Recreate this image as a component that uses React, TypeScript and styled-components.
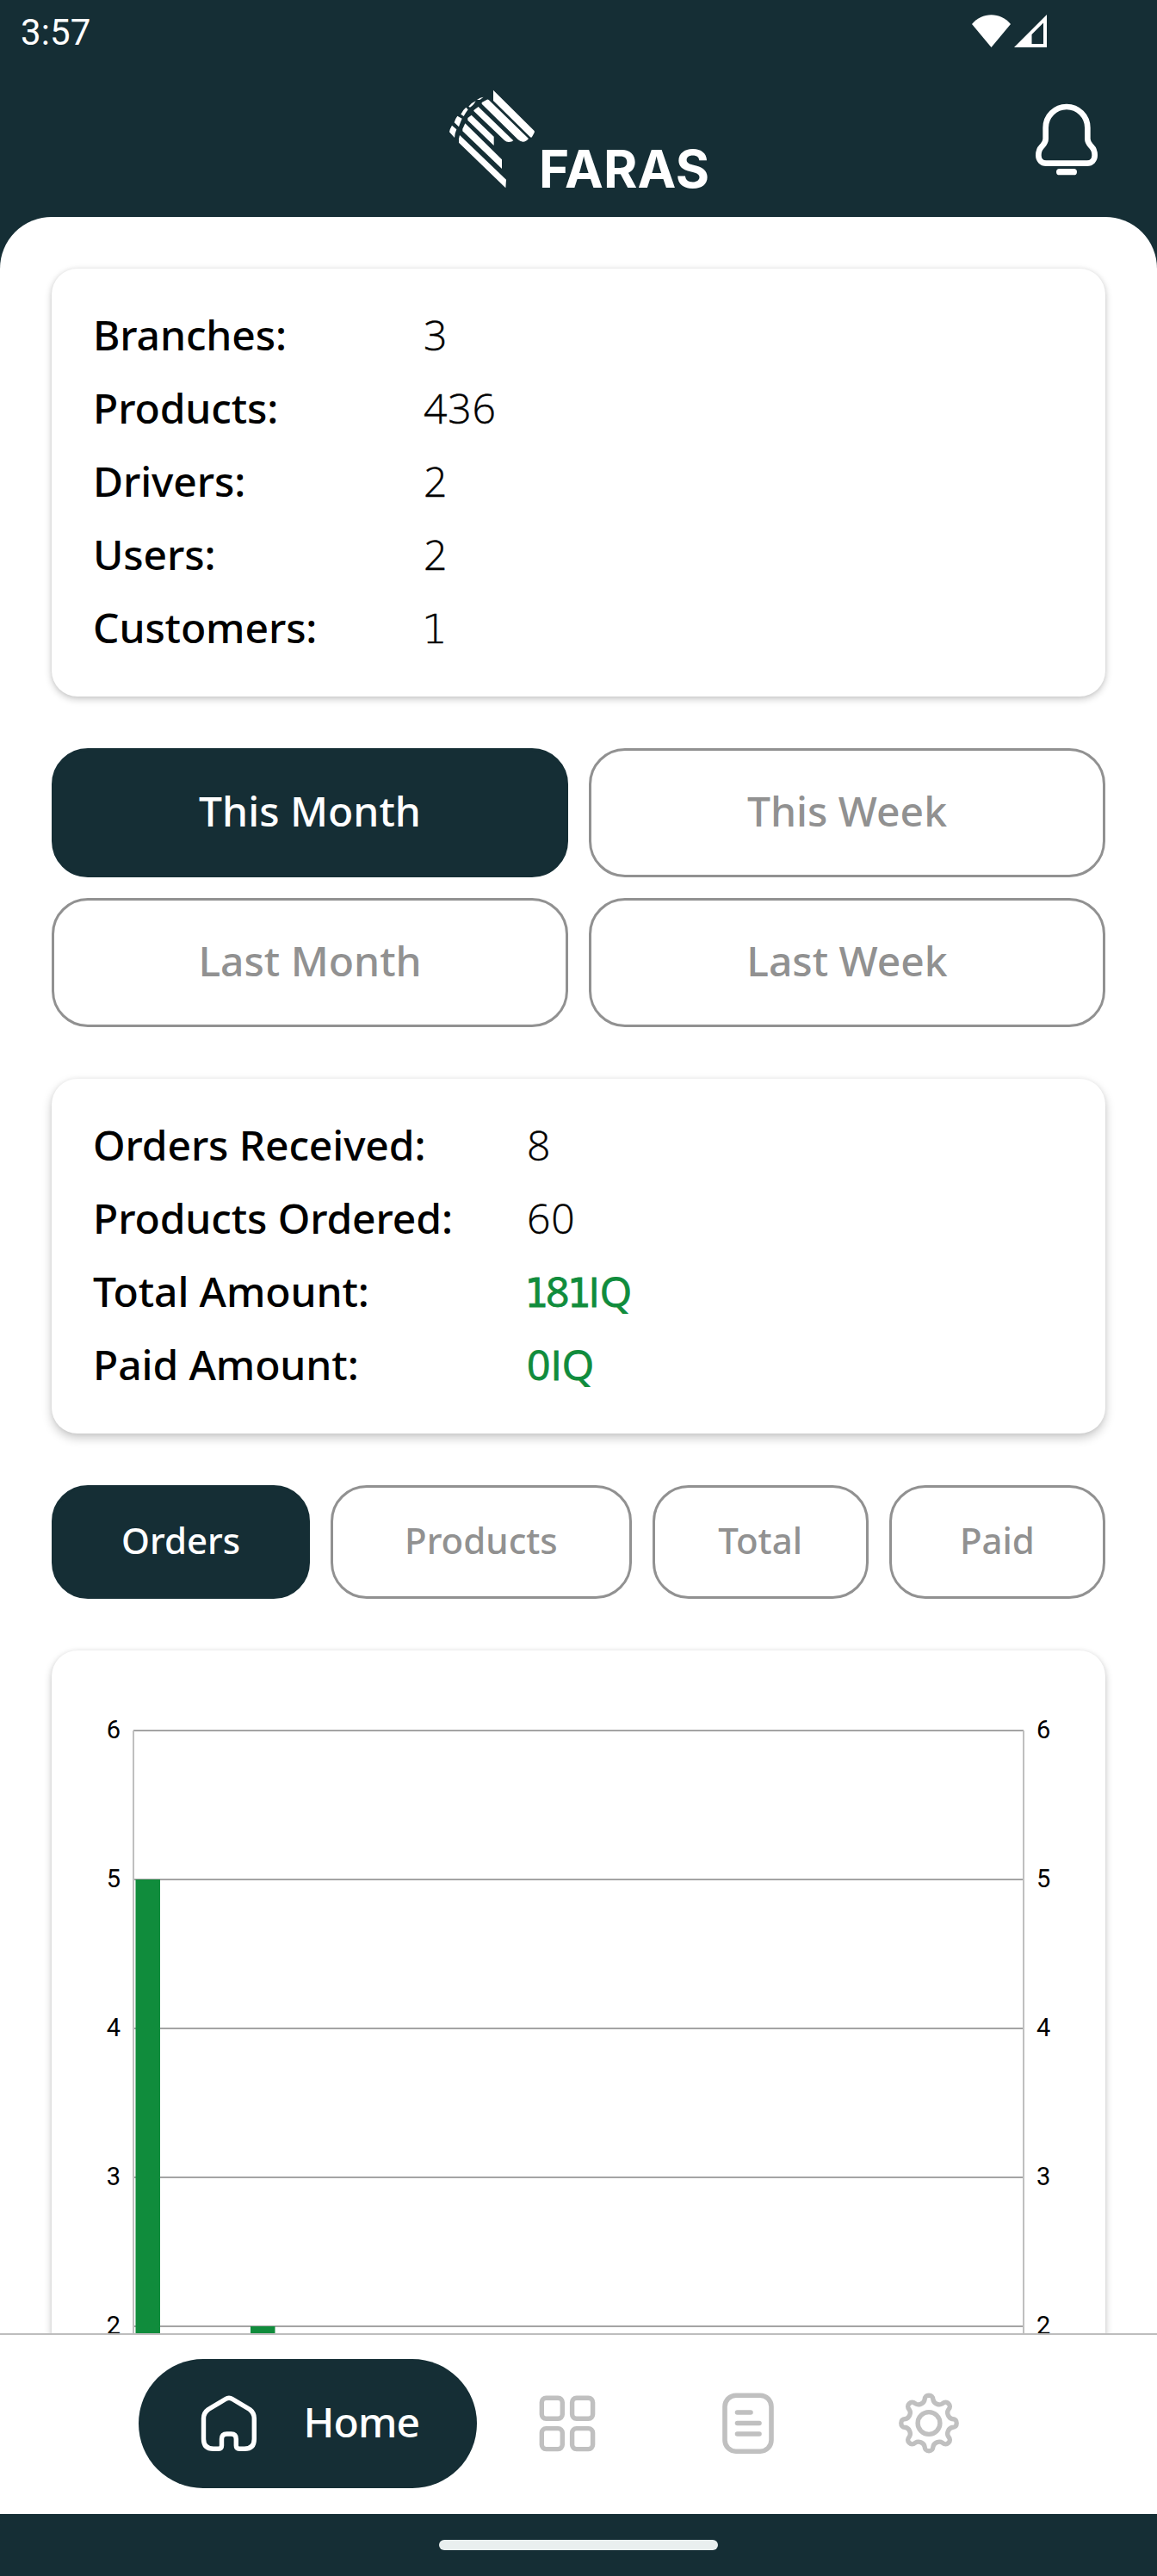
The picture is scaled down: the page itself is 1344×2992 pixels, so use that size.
import React from "react";
import styled, { createGlobalStyle } from "styled-components";

const INK = "#152e35";
const GREEN = "#108c3c";
const GREY = "#919191";
const ICON = "#c0c0c0";
const SANS = '"Noto Sans", "Open Sans", sans-serif';

const GlobalStyle = createGlobalStyle`
  *, *::before, *::after { box-sizing: border-box; }
  body { margin: 0; background: ${INK}; }
  button { font: inherit; margin: 0; cursor: pointer; }
  svg { display: block; flex: none; }
`;

const Screen = styled.div`
  display: flex;
  flex-direction: column;
  width: 1344px;
  height: 2992px;
  overflow: hidden;
  background: ${INK};
  font-family: ${SANS};
  font-weight: 500;
`;

const StatusBar = styled.div`
  display: flex;
  align-items: center;
  height: 75px;
  flex: none;
  padding: 0 128px 0 24px;
  color: #fff;
`;

const Clock = styled.span`
  flex: 1;
  font: 400 42px/75px Roboto, sans-serif;
  letter-spacing: 0.1px;
`;

const StatusIcons = styled.div`
  display: flex;
  gap: 4px;
  padding-bottom: 4px;
`;

const Header = styled.header`
  display: grid;
  grid-template-columns: 1fr 300px 1fr;
  align-items: center;
  height: 177px;
  flex: none;
  padding-bottom: 4px;
`;

const Brand = styled.div`
  grid-column: 2;
  display: flex;
  align-items: flex-end;
  gap: 4px;
`;

const BrandName = styled.span`
  margin-bottom: 1px;
  color: #fff;
  font: 700 60px/44px Inter, sans-serif;
  letter-spacing: 0.2px;
`;

const BellButton = styled.button`
  justify-self: end;
  margin-right: 66px;
  padding: 0;
  border: 0;
  background: none;
`;

const Sheet = styled.main`
  display: flex;
  flex-direction: column;
  flex: 1;
  min-height: 0;
  gap: 60px;
  overflow: hidden;
  padding: 60px 60px 0;
  border-radius: 60px 60px 0 0;
  background: #fff;
`;

const Card = styled.section<{ $depth: number }>`
  flex: none;
  border-radius: 30px;
  background: #fff;
  box-shadow: 0 ${(p) => p.$depth}px ${(p) => p.$depth * 2 + 2}px rgba(0, 0, 0, 0.22),
    0 0 5px rgba(0, 0, 0, 0.06);
`;

const StatCard = styled(Card)`
  padding: 34px 48px 38px;
`;

const StatRow = styled.div<{ $labelWidth: number }>`
  display: grid;
  grid-template-columns: ${(p) => p.$labelWidth}px 1fr;
  align-items: baseline;
  height: 85px;
  color: #000;
  font-size: 48px;
  line-height: 85px;
`;

const StatLabel = styled.span`
  letter-spacing: -0.1px;
`;

const StatValue = styled.span<{ $money?: boolean }>`
  font-family: "Open Sans", ${SANS};
  font-weight: ${(p) => (p.$money ? 500 : 300)};
  letter-spacing: ${(p) => (p.$money ? 0 : 0.8)}px;
  color: ${(p) => (p.$money ? GREEN : "#000")};
  -webkit-text-stroke: ${(p) => (p.$money ? 0.9 : 0.4)}px currentColor;
`;

const FootedOne = styled.span<{ $light: boolean }>`
  display: inline-block;
  width: 23px;
  margin-left: -2px;
  margin-right: 1px;
  font-family: ${(p) => (p.$light ? '"DejaVu Sans Light", "DejaVu Sans"' : '"DejaVu Sans Condensed", "DejaVu Sans"')}, sans-serif;
  font-weight: ${(p) => (p.$light ? 200 : 400)};
  font-size: 47px;
  font-stretch: ${(p) => (p.$light ? "normal" : "condensed")};
  line-height: 0;
`;

const PeriodGrid = styled.div`
  display: grid;
  grid-template-columns: 1fr 1fr;
  grid-auto-rows: 150px;
  gap: 24px;
  flex: none;
`;

const TabRow = styled.div`
  display: flex;
  gap: 24px;
  height: 132px;
  flex: none;
`;

const Pill = styled.button<{ $active?: boolean; $size: number; $grow?: number }>`
  flex: ${(p) => p.$grow ?? 1} 1 0;
  min-width: 0;
  display: flex;
  align-items: center;
  justify-content: center;
  padding: 0 0 5px;
  border: 3px solid ${(p) => (p.$active ? INK : GREY)};
  border-radius: 42px;
  background: ${(p) => (p.$active ? INK : "#fff")};
  color: ${(p) => (p.$active ? "#fff" : GREY)};
  font-size: ${(p) => p.$size}px;
`;

const ChartCard = styled(Card)`
  height: 1200px;
`;

const NavBar = styled.nav`
  display: flex;
  justify-content: center;
  align-items: flex-start;
  height: 210px;
  flex: none;
  padding-top: 28px;
  border-top: 2px solid #bdbdbd;
  background: #fff;
`;

const HomeTab = styled.button`
  display: flex;
  align-items: center;
  gap: 51px;
  width: 393px;
  height: 150px;
  padding: 0 0 0 69px;
  border: 0;
  border-radius: 75px;
  background: ${INK};
  color: #fff;
  font-size: 48px;
`;

const HomeLabel = styled.span`
  padding-bottom: 5px;
  letter-spacing: -0.9px;
`;

const NavTab = styled.button`
  display: flex;
  align-items: center;
  justify-content: center;
  width: 210px;
  height: 150px;
  padding: 0;
  border: 0;
  background: none;
`;

const GestureBar = styled.div`
  display: flex;
  justify-content: center;
  height: 72px;
  flex: none;
  padding-top: 30px;
  background: ${INK};
`;

const GestureHandle = styled.div`
  width: 324px;
  height: 12px;
  border-radius: 6px;
  background: #e9efef;
`;

const WifiIcon = () => (
  <svg width="45" height="38" viewBox="0 0 45 38">
    <path d="M22.5 38 0 11C6 4 14 .3 22.5 .3S39 4 45 11Z" fill="#fff" />
  </svg>
);

const SignalIcon = () => (
  <svg width="38" height="38" viewBox="0 0 38 38">
    <path fillRule="evenodd" d="M38 0V38H0ZM34 9.5 20.5 23V34H34Z" fill="#fff" />
  </svg>
);

const HorseMark = () => (
  <svg width="100" height="115" viewBox="66 42 300 345" fill="#fff">
    <path d="M219 44 362 186Q364 190 361 194L354 207Q352 211 348 208L219 81Z" />
    <path d="M179 87 197 77Q201 76 204 79L342 213Q334 224 322 224 312 223 305 216L179 92Z" />
    <path d="M151 114 167 102 289 220Q284 225 273 225 264 225 258 219L151 117Z" />
    <path d="M130 141 143 131 221 206V237L130 149Z" />
    <path d="M112 179 121 160 249 286V318L112 187Z" />
    <path d="M99 214 102 201 264 356 262 385 99 227Z" />
    <path d="M66 190Q68 178 75 167L91 181Q85 194 84 210Z" />
    <path d="M83 157Q86 144 94 134L110 143Q104 157 99 172Z" />
    <path d="M106 128Q113 113 124 104L131 112Q122 124 116 135Z" />
    <path d="M133 101Q143 88 158 82L151 93Q145 100 138 104Z" />
    <path d="M162 78Q173 69 185 68L172 78Z" />
  </svg>
);

const BellIcon = () => (
  <svg width="78" height="90" viewBox="300 351 234 270" fill="none">
    <path
      d="M344 445a73 73 0 0 1 146 0V484c0 14 8 20 14 27 8 8 11 18 11 30 0 17-11 28-27 28H346c-16 0-27-11-27-28 0-12 3-22 11-30 6-7 14-13 14-27Z"
      stroke="#fff"
      strokeWidth="20"
      strokeLinejoin="round"
    />
    <rect x="381" y="588" width="72" height="22" rx="11" fill="#fff" />
  </svg>
);

const HomeIcon = () => (
  <svg width="72" height="72" viewBox="0 0 72 72" fill="none" stroke="#fff" strokeWidth="5.4" strokeLinejoin="round">
    <path d="M32 7.5Q36 4.8 40 7.5L60 19.5Q65.3 23.5 65.3 30V54Q65.3 65.3 54 65.3H48Q44.3 65.3 44.3 61.5V54Q44.3 48 38.5 48H33.5Q27.5 48 27.5 54V61.5Q27.5 65.3 24 65.3H18Q6.5 65.3 6.5 54V30Q6.5 23.5 12 19.5Z" />
  </svg>
);

const AppsIcon = () => (
  <svg width="72" height="72" viewBox="0 0 72 72" fill="none" stroke={ICON} strokeWidth="5.4">
    <rect x="6.3" y="6.3" width="24" height="24" rx="5" />
    <rect x="41.6" y="6.3" width="24" height="24" rx="5" />
    <rect x="6.3" y="41.6" width="24" height="24" rx="5" />
    <rect x="41.6" y="41.6" width="24" height="24" rx="5" />
  </svg>
);

const DocumentIcon = () => (
  <svg width="72" height="72" viewBox="0 0 72 72" fill="none" stroke={ICON} strokeWidth="5.6" strokeLinecap="round">
    <rect x="9" y="3.2" width="54" height="65" rx="13" />
    <path d="M23.5 23H39M23.5 35.5H49M23.5 48H49" />
  </svg>
);

const turn = (x: number, y: number, deg: number) => {
  const a = (deg * Math.PI) / 180;
  const px = 36 + x * Math.cos(a) - y * Math.sin(a);
  const py = 35.5 + x * Math.sin(a) + y * Math.cos(a);
  return `${px.toFixed(2)} ${py.toFixed(2)}`;
};

// One tooth and the valley after it, repeated every 45 degrees.
const gearPath =
  `M${turn(-5, -27, 0)}` +
  Array.from({ length: 8 }, (_, i) => {
    const p = (x: number, y: number) => turn(x, y, i * 45);
    return `C${p(-4.6, -30.5)} ${p(-3.6, -32.2)} ${p(0, -32.2)}C${p(3.6, -32.2)} ${p(4.6, -30.5)} ${p(5, -27)}C${p(5.8, -22.8)} ${p(12, -20.2)} ${p(15.55, -22.63)}`;
  }).join("") +
  "Z";

const GearIcon = () => (
  <svg width="72" height="72" viewBox="0 0 72 72" fill="none" stroke={ICON} strokeWidth="5.4" strokeLinejoin="round">
    <path d={gearPath} />
    <circle cx="36" cy="35.5" r="12.9" />
  </svg>
);

const CHART = { left: 95, right: 1129, top: 93, step: 173, max: 6 };
const levels = [6, 5, 4, 3, 2, 1, 0];
const bars = [
  { x: 97.5, value: 5 },
  { x: 231, value: 2 },
];
const levelY = (v: number) => CHART.top + (CHART.max - v) * CHART.step;

const AxisLabel = styled.text`
  font: 400 29px Roboto, sans-serif;
  fill: #000;
`;

const OrdersChart = () => (
  <svg width="1224" height="1200" viewBox="0 0 1224 1200">
    {levels.map((v) => (
      <g key={v}>
        <AxisLabel x="80" y={levelY(v) + 8.5} textAnchor="end">{v}</AxisLabel>
        <AxisLabel x="1144" y={levelY(v) + 8.5}>{v}</AxisLabel>
        <path d={`M${CHART.left} ${levelY(v)}H${CHART.right}`} stroke="#a4a4a4" strokeWidth="2" />
      </g>
    ))}
    <path
      d={`M${CHART.left} ${CHART.top}V${levelY(0)}M${CHART.right} ${CHART.top}V${levelY(0)}`}
      stroke="#c0c0c0"
      strokeWidth="2"
    />
    {bars.map((b) => (
      <rect key={b.x} x={b.x} y={levelY(b.value)} width="28.5" height={levelY(0) - levelY(b.value)} fill={GREEN} />
    ))}
  </svg>
);

type Stat = { label: string; value: string; money?: boolean };

const totals: Stat[] = [
  { label: "Branches:", value: "3" },
  { label: "Products:", value: "436" },
  { label: "Drivers:", value: "2" },
  { label: "Users:", value: "2" },
  { label: "Customers:", value: "1" },
];

const sales: Stat[] = [
  { label: "Orders Received:", value: "8" },
  { label: "Products Ordered:", value: "60" },
  { label: "Total Amount:", value: "181IQ", money: true },
  { label: "Paid Amount:", value: "0IQ", money: true },
];

const Figure = ({ value, money }: { value: string; money?: boolean }) => (
  <StatValue $money={money}>
    {value.split("").map((ch, i) =>
      ch === "1" ? <FootedOne key={i} $light={!money}>{ch}</FootedOne> : ch,
    )}
  </StatValue>
);

const Stats = ({ items, labelWidth, depth }: { items: Stat[]; labelWidth: number; depth: number }) => (
  <StatCard $depth={depth}>
    {items.map((s) => (
      <StatRow key={s.label} $labelWidth={labelWidth}>
        <StatLabel>{s.label}</StatLabel>
        <Figure value={s.value} money={s.money} />
      </StatRow>
    ))}
  </StatCard>
);

const periods = ["This Month", "This Week", "Last Month", "Last Week"];
const metrics = [
  { name: "Orders", grow: 6 },
  { name: "Products", grow: 7 },
  { name: "Total", grow: 5 },
  { name: "Paid", grow: 5 },
];

export default function App() {
  return (
    <>
      <GlobalStyle />
      <Screen>
        <StatusBar>
          <Clock>3:57</Clock>
          <StatusIcons>
            <WifiIcon />
            <SignalIcon />
          </StatusIcons>
        </StatusBar>
        <Header>
          <Brand>
            <HorseMark />
            <BrandName>FARAS</BrandName>
          </Brand>
          <BellButton aria-label="Notifications">
            <BellIcon />
          </BellButton>
        </Header>
        <Sheet>
          <Stats items={totals} labelWidth={384} depth={3} />
          <PeriodGrid>
            {periods.map((p, i) => (
              <Pill key={p} $active={i === 0} $size={48}>{p}</Pill>
            ))}
          </PeriodGrid>
          <Stats items={sales} labelWidth={504} depth={5} />
          <TabRow>
            {metrics.map((m, i) => (
              <Pill key={m.name} $active={i === 0} $size={42} $grow={m.grow}>{m.name}</Pill>
            ))}
          </TabRow>
          <ChartCard $depth={4}>
            <OrdersChart />
          </ChartCard>
        </Sheet>
        <NavBar>
          <HomeTab>
            <HomeIcon />
            <HomeLabel>Home</HomeLabel>
          </HomeTab>
          <NavTab aria-label="Catalog"><AppsIcon /></NavTab>
          <NavTab aria-label="Orders"><DocumentIcon /></NavTab>
          <NavTab aria-label="Settings"><GearIcon /></NavTab>
        </NavBar>
        <GestureBar>
          <GestureHandle />
        </GestureBar>
      </Screen>
    </>
  );
}
